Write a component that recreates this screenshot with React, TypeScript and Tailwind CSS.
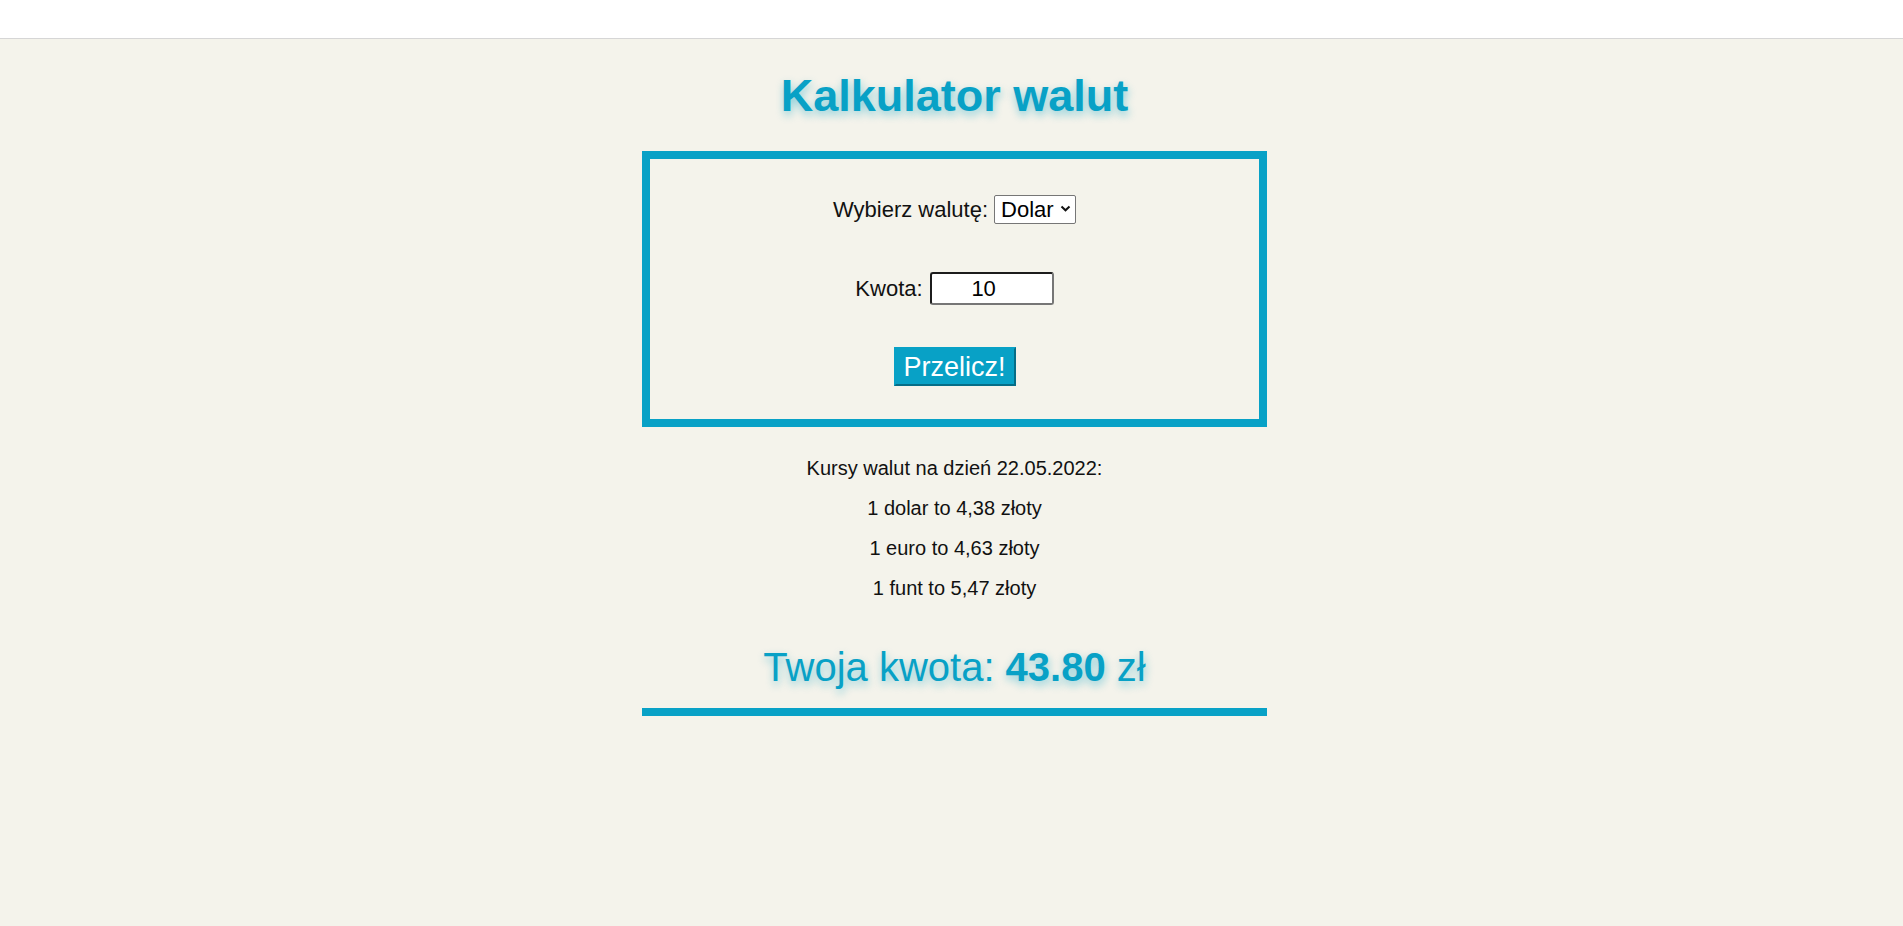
import React, { useState } from "react";

const rates: { [key: string]: number } = {
  dolar: 4.38,
  euro: 4.63,
  funt: 5.47,
};

const App: React.FC = () => {
  const [currency, setCurrency] = useState("dolar");
  const [amount, setAmount] = useState("10");
  const [result, setResult] = useState(43.8);

  const handleSubmit = (e: React.FormEvent) => {
    e.preventDefault();
    const value = parseFloat(amount.replace(",", "."));
    if (!isNaN(value)) {
      setResult(value * rates[currency]);
    }
  };

  return (
    <div className="min-h-screen bg-[#f4f3eb] font-['Liberation_Sans',Arial,sans-serif] text-[#111]">
      {/* top bar */}
      <header className="h-[39px] bg-white border-b border-[#d6d6d6]" />

      <main className="flex flex-col items-center pl-[6px]">
        <h1 className="mt-[31px] h-[52px] text-[45px] leading-[52px] font-bold text-[#08a1c6] [text-shadow:1px_4px_8px_rgba(8,161,198,0.45)]">
          Kalkulator walut
        </h1>

        {/* form box */}
        <form
          onSubmit={handleSubmit}
          className="mt-[29px] w-[625px] border-8 border-[#08a1c6] flex flex-col items-center pt-[36px] pb-[33px] text-[22px]"
        >
          <div className="flex items-center h-[29px] gap-[6px]">
            <label htmlFor="currency" className="leading-[25px]">
              Wybierz walutę:
            </label>
            <div className="relative">
              <select
                id="currency"
                value={currency}
                onChange={(e) => setCurrency(e.target.value)}
                className="appearance-none h-[29px] w-[82px] pl-[6px] pr-[20px] bg-white border border-[#767676] rounded-[2px] leading-[25px] text-black"
              >
                <option value="dolar">Dolar</option>
                <option value="euro">Euro</option>
                <option value="funt">Funt</option>
              </select>
              <svg
                className="absolute right-[5px] top-[12px] pointer-events-none"
                width="11"
                height="7"
                viewBox="0 0 11 7"
              >
                <path d="M1.5 1.5 L5.5 5.3 L9.5 1.5" fill="none" stroke="#111" strokeWidth="2" />
              </svg>
            </div>
          </div>

          <div className="mt-[48px] flex items-center h-[33px] gap-[7px]">
            <label htmlFor="amount" className="leading-[25px]">
              Kwota:
            </label>
            <input
              id="amount"
              type="text"
              value={amount}
              onChange={(e) => setAmount(e.target.value)}
              className="h-[33px] w-[124px] bg-white border-2 border-t-[#1c1c1c] border-l-[#1c1c1c] border-b-[#767676] border-r-[#767676] rounded-[3px] text-center pr-[16px] text-black outline-none"
            />
          </div>

          <button
            type="submit"
            className="mt-[42px] h-[39px] w-[122px] bg-[#08a1c6] text-white text-[27px] leading-[30px] border-2 border-t-[#08a1c6] border-l-[#08a1c6] border-b-[#056d87] border-r-[#056d87] cursor-pointer"
          >
            Przelicz!
          </button>
        </form>

        {/* rates */}
        <div className="mt-[31px] flex flex-col items-center gap-[20px] text-[20px] leading-[20px]">
          <p>Kursy walut na dzień 22.05.2022:</p>
          <p>1 dolar to 4,38 złoty</p>
          <p>1 euro to 4,63 złoty</p>
          <p>1 funt to 5,47 złoty</p>
        </div>

        {/* result */}
        <div className="mt-[46px] w-[625px] text-center text-[40px] leading-[46px] pb-[18px] border-b-8 border-[#08a1c6] text-[#08a1c6] [text-shadow:1px_4px_8px_rgba(8,161,198,0.45)]">
          Twoja kwota: <strong className="font-bold">{result.toFixed(2)}</strong> zł
        </div>
      </main>
    </div>
  );
};

export default App;
